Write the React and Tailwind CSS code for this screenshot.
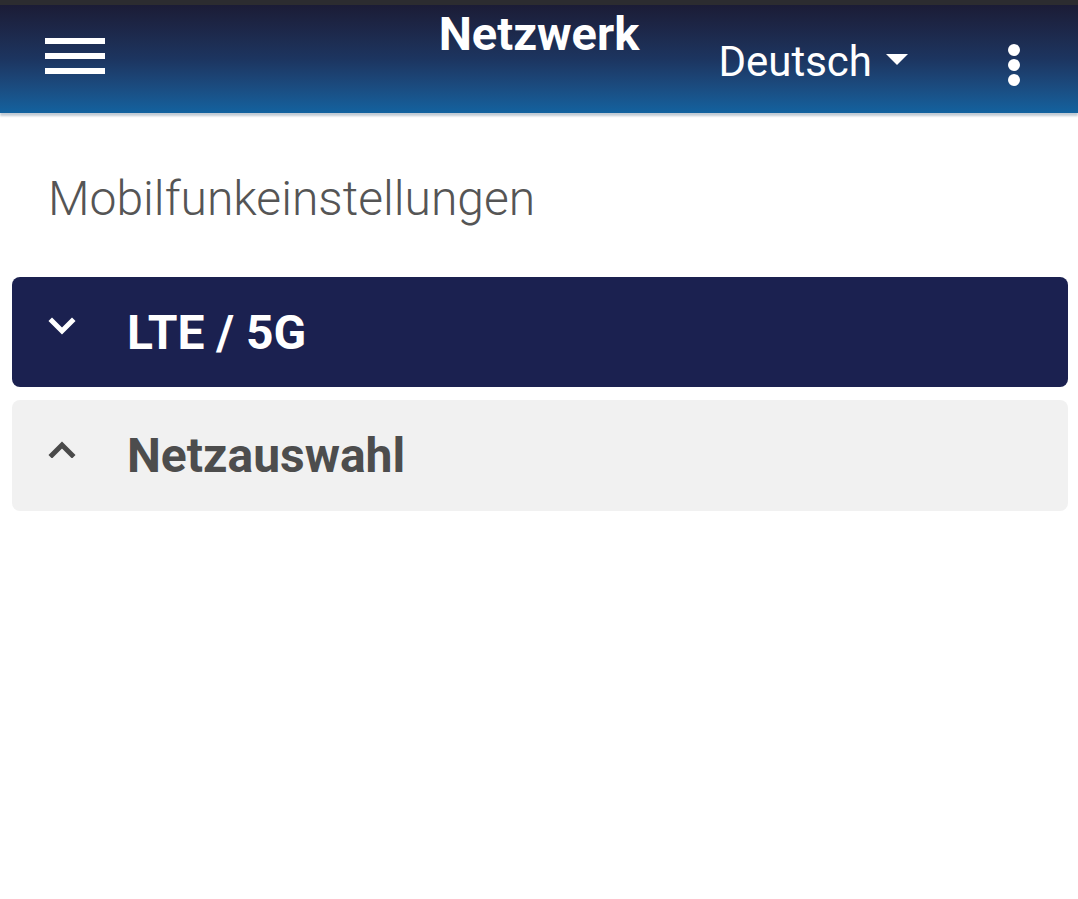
const Header = () => {
    return (
        <div className="bg-[#2c2c30] pt-[5px]">
            {/* Top app bar with gradient */}
            <div className="grid h-[108px] grid-cols-[1fr_auto_1fr] bg-gradient-to-b from-[#1b1c36] via-[#1c3560] to-[#12629f] shadow-[0_3px_2px_rgba(120,140,160,0.45)]">
                {/* Hamburger */}
                <div className="flex items-start pl-[45px] pt-[33px]">
                    <div className="flex w-[60px] flex-col gap-[9px]">
                        <span className="block h-[6px] bg-white"></span>
                        <span className="block h-[6px] bg-white"></span>
                        <span className="block h-[6px] bg-white"></span>
                    </div>
                </div>

                {/* Title */}
                <h1 className="pt-[1px] text-[47px] font-bold leading-[56px] text-white">Netzwerk</h1>

                {/* Language + menu */}
                <div className="flex items-center justify-end pr-[58px] pt-[6px]">
                    <span className="text-[42px] leading-none text-white">Deutsch</span>
                    <svg width="22" height="11" viewBox="0 0 22 11" className="ml-[14px] mt-[-6px]">
                        <path d="M0 0 H22 L11 11 Z" fill="#fff" />
                    </svg>
                    <div className="ml-[100px] flex flex-col gap-[3px] pt-[5px]">
                        <span className="block h-[12px] w-[12px] rounded-full bg-white"></span>
                        <span className="block h-[12px] w-[12px] rounded-full bg-white"></span>
                        <span className="block h-[12px] w-[12px] rounded-full bg-white"></span>
                    </div>
                </div>
            </div>
        </div>
    );
};

const Chevron = ({ up, color }) => (
    <svg width="28" height="18" viewBox="0 0 28 18" className="shrink-0">
        <path
            d={up ? 'M4 15 L14 5 L24 15' : 'M4 4 L14 14 L24 4'}
            fill="none"
            stroke={color}
            strokeWidth="5"
            strokeLinecap="square"
        />
    </svg>
);

const App = () => {
    return (
        <div className="min-h-screen bg-white font-['Roboto',sans-serif]">
            <Header />

            {/* Section heading */}
            <h2 className="pl-[48px] pt-[62px] text-[48px] font-light leading-none text-[#555555]">
                Mobilfunkeinstellungen
            </h2>

            {/* Accordion items */}
            <div className="mt-[54px] flex flex-col gap-[13px] pl-[12px] pr-[10px]">
                <div className="flex h-[110px] items-start rounded-[8px] bg-[#1b2150] pl-[36px] pt-[40px]">
                    <Chevron color="#ffffff" />
                    <span className="ml-[51px] mt-[-8px] text-[48px] font-bold leading-none text-white">LTE / 5G</span>
                </div>
                <div className="flex h-[111px] items-start rounded-[8px] bg-[#f1f1f1] pl-[36px] pt-[40px]">
                    <Chevron up color="#4a4a4a" />
                    <span className="ml-[51px] mt-[-8px] text-[48px] font-bold leading-none text-[#4d4d4d]">Netzauswahl</span>
                </div>
            </div>
        </div>
    );
};

export default App;
